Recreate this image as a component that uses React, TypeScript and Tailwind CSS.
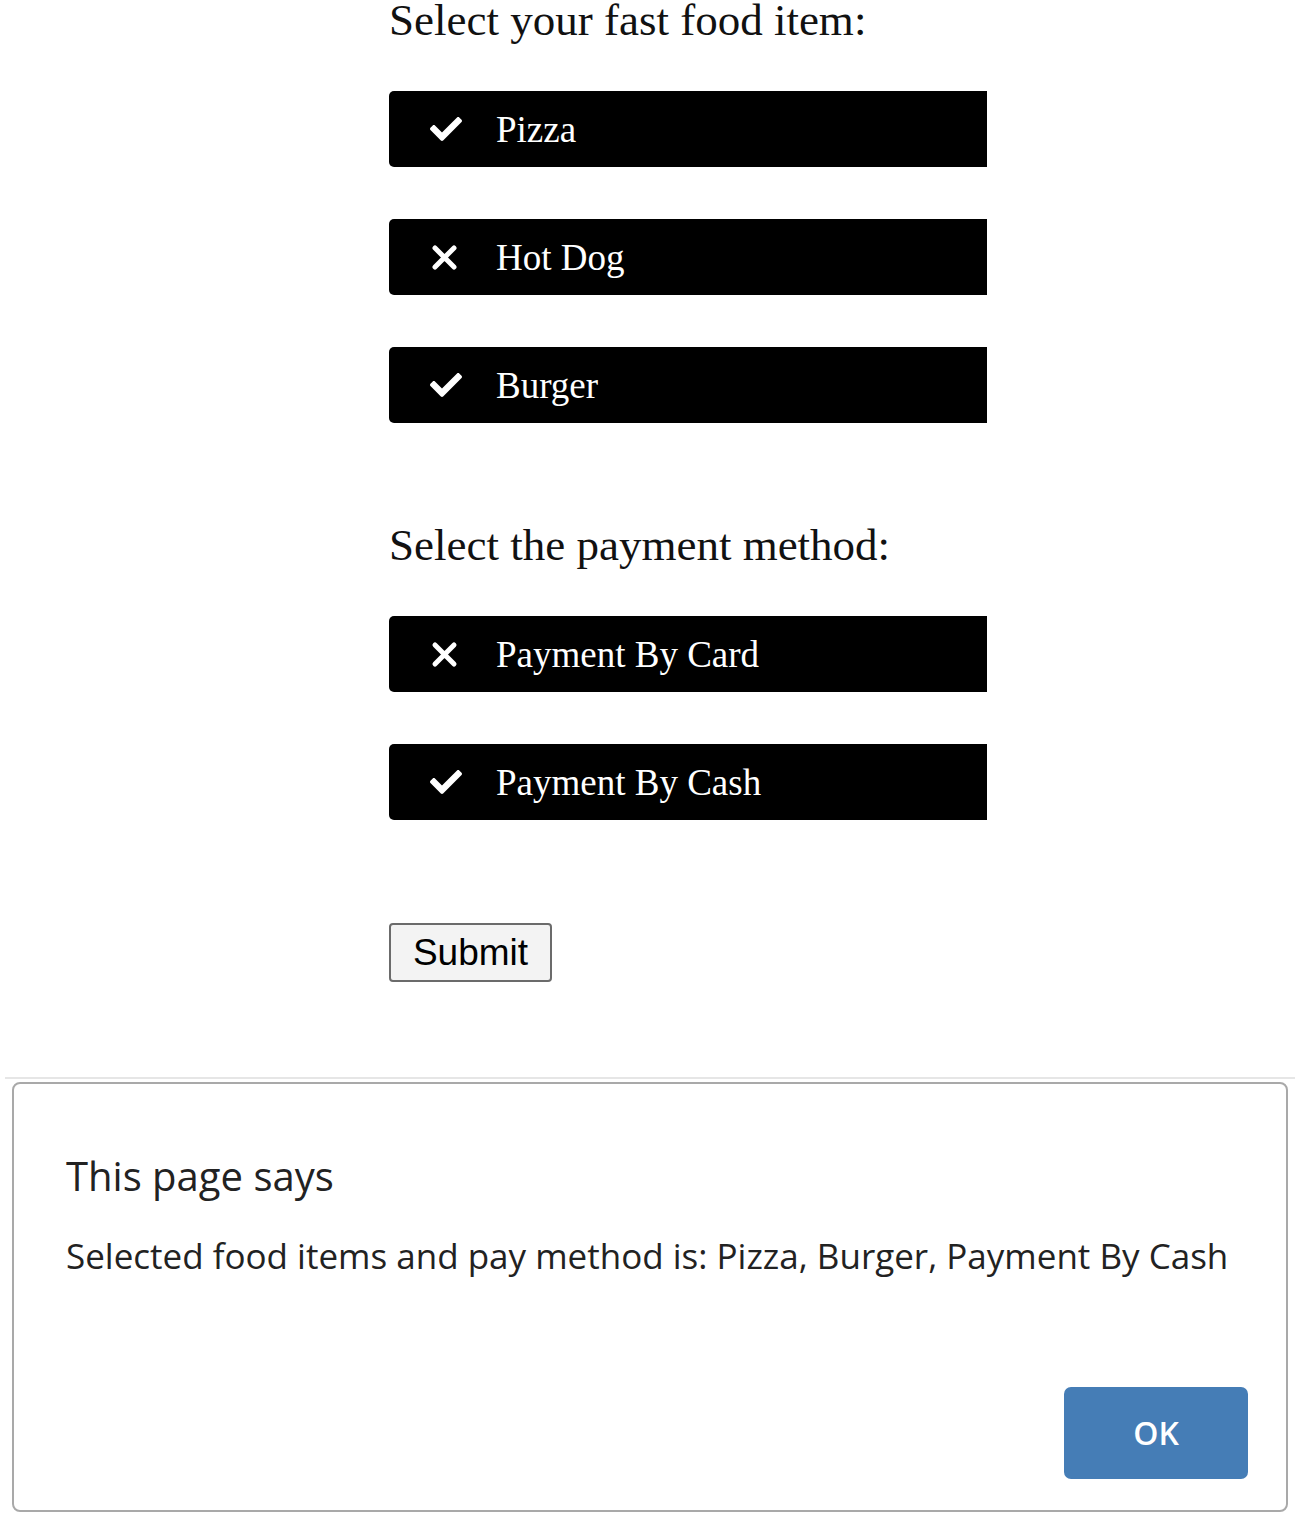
import { FaCheck } from "react-icons/fa";

interface Choice {
  label: string;
  selected: boolean;
}

const foods: Choice[] = [
  { label: "Pizza", selected: true },
  { label: "Hot Dog", selected: false },
  { label: "Burger", selected: true },
];

const payments: Choice[] = [
  { label: "Payment By Card", selected: false },
  { label: "Payment By Cash", selected: true },
];

const serif = { fontFamily: '"Liberation Serif", "Times New Roman", serif' };

function ChoiceRow({ choice }: { choice: Choice }) {
  return (
    <div className="flex h-[76px] w-[598px] items-center rounded-l-[5px] bg-black pl-[41px] text-white">
      <div className="flex w-[66px] items-center">
        {choice.selected ? (
          <FaCheck className="h-[32px] w-[32px]" />
        ) : (
          <svg width="27" height="27" viewBox="0 0 27 27" className="ml-[1px]">
            <path d="M4 4L23 23M23 4L4 23" stroke="white" strokeWidth="5" strokeLinecap="round" />
          </svg>
        )}
      </div>
      <span className="text-[37px] leading-none" style={serif}>
        {choice.label}
      </span>
    </div>
  );
}

export default function App() {
  return (
    <div className="relative min-h-[1519px] w-[1300px] bg-white">
      <div className="flex flex-col pl-[389px]">
        <div className="-mt-[6px] text-[45px] leading-[52px] text-[#111]" style={serif}>
          Select your fast food item:
        </div>

        {/* Food items */}
        <div className="mt-[45px] flex flex-col gap-[52px]">
          {foods.map((f) => (
            <ChoiceRow key={f.label} choice={f} />
          ))}
        </div>

        <div className="mt-[96px] text-[45px] leading-[52px] text-[#111]" style={serif}>
          Select the payment method:
        </div>

        {/* Payment */}
        <div className="mt-[45px] flex flex-col gap-[52px]">
          {payments.map((p) => (
            <ChoiceRow key={p.label} choice={p} />
          ))}
        </div>

        <div className="mt-[103px]">
          <button
            className="flex h-[59px] w-[163px] items-center justify-center rounded-[4px] border-2 border-[#6b6b6b] bg-[#f3f3f3] text-[37px] text-black"
            style={{ fontFamily: '"Liberation Sans", Arial, sans-serif' }}
          >
            Submit
          </button>
        </div>
      </div>

      {/* Alert dialog */}
      <div className="mx-[5px] mt-[95px] h-[2px] bg-[#e6e6e6]" />
      <div
        className="mx-[12px] mt-[3px] flex h-[430px] flex-col rounded-[8px] border-2 border-[#a9a9a9] bg-white px-[52px]"
        style={{ fontFamily: '"Open Sans", "Noto Sans", sans-serif' }}
      >
        <div className="mt-[66px] text-[40px] leading-[52px] text-[#222]">This page says</div>
        <div className="mt-[30px] text-[35px] leading-[48px] text-[#222]">
          Selected food items and pay method is: Pizza, Burger, Payment By Cash
        </div>
        <div className="mt-auto mb-[31px] flex justify-end">
          <button className="-mr-[14px] flex h-[92px] w-[184px] items-center justify-center rounded-[7px] bg-[#457db6] text-[32px] font-semibold text-white">
            OK
          </button>
        </div>
      </div>
    </div>
  );
}
